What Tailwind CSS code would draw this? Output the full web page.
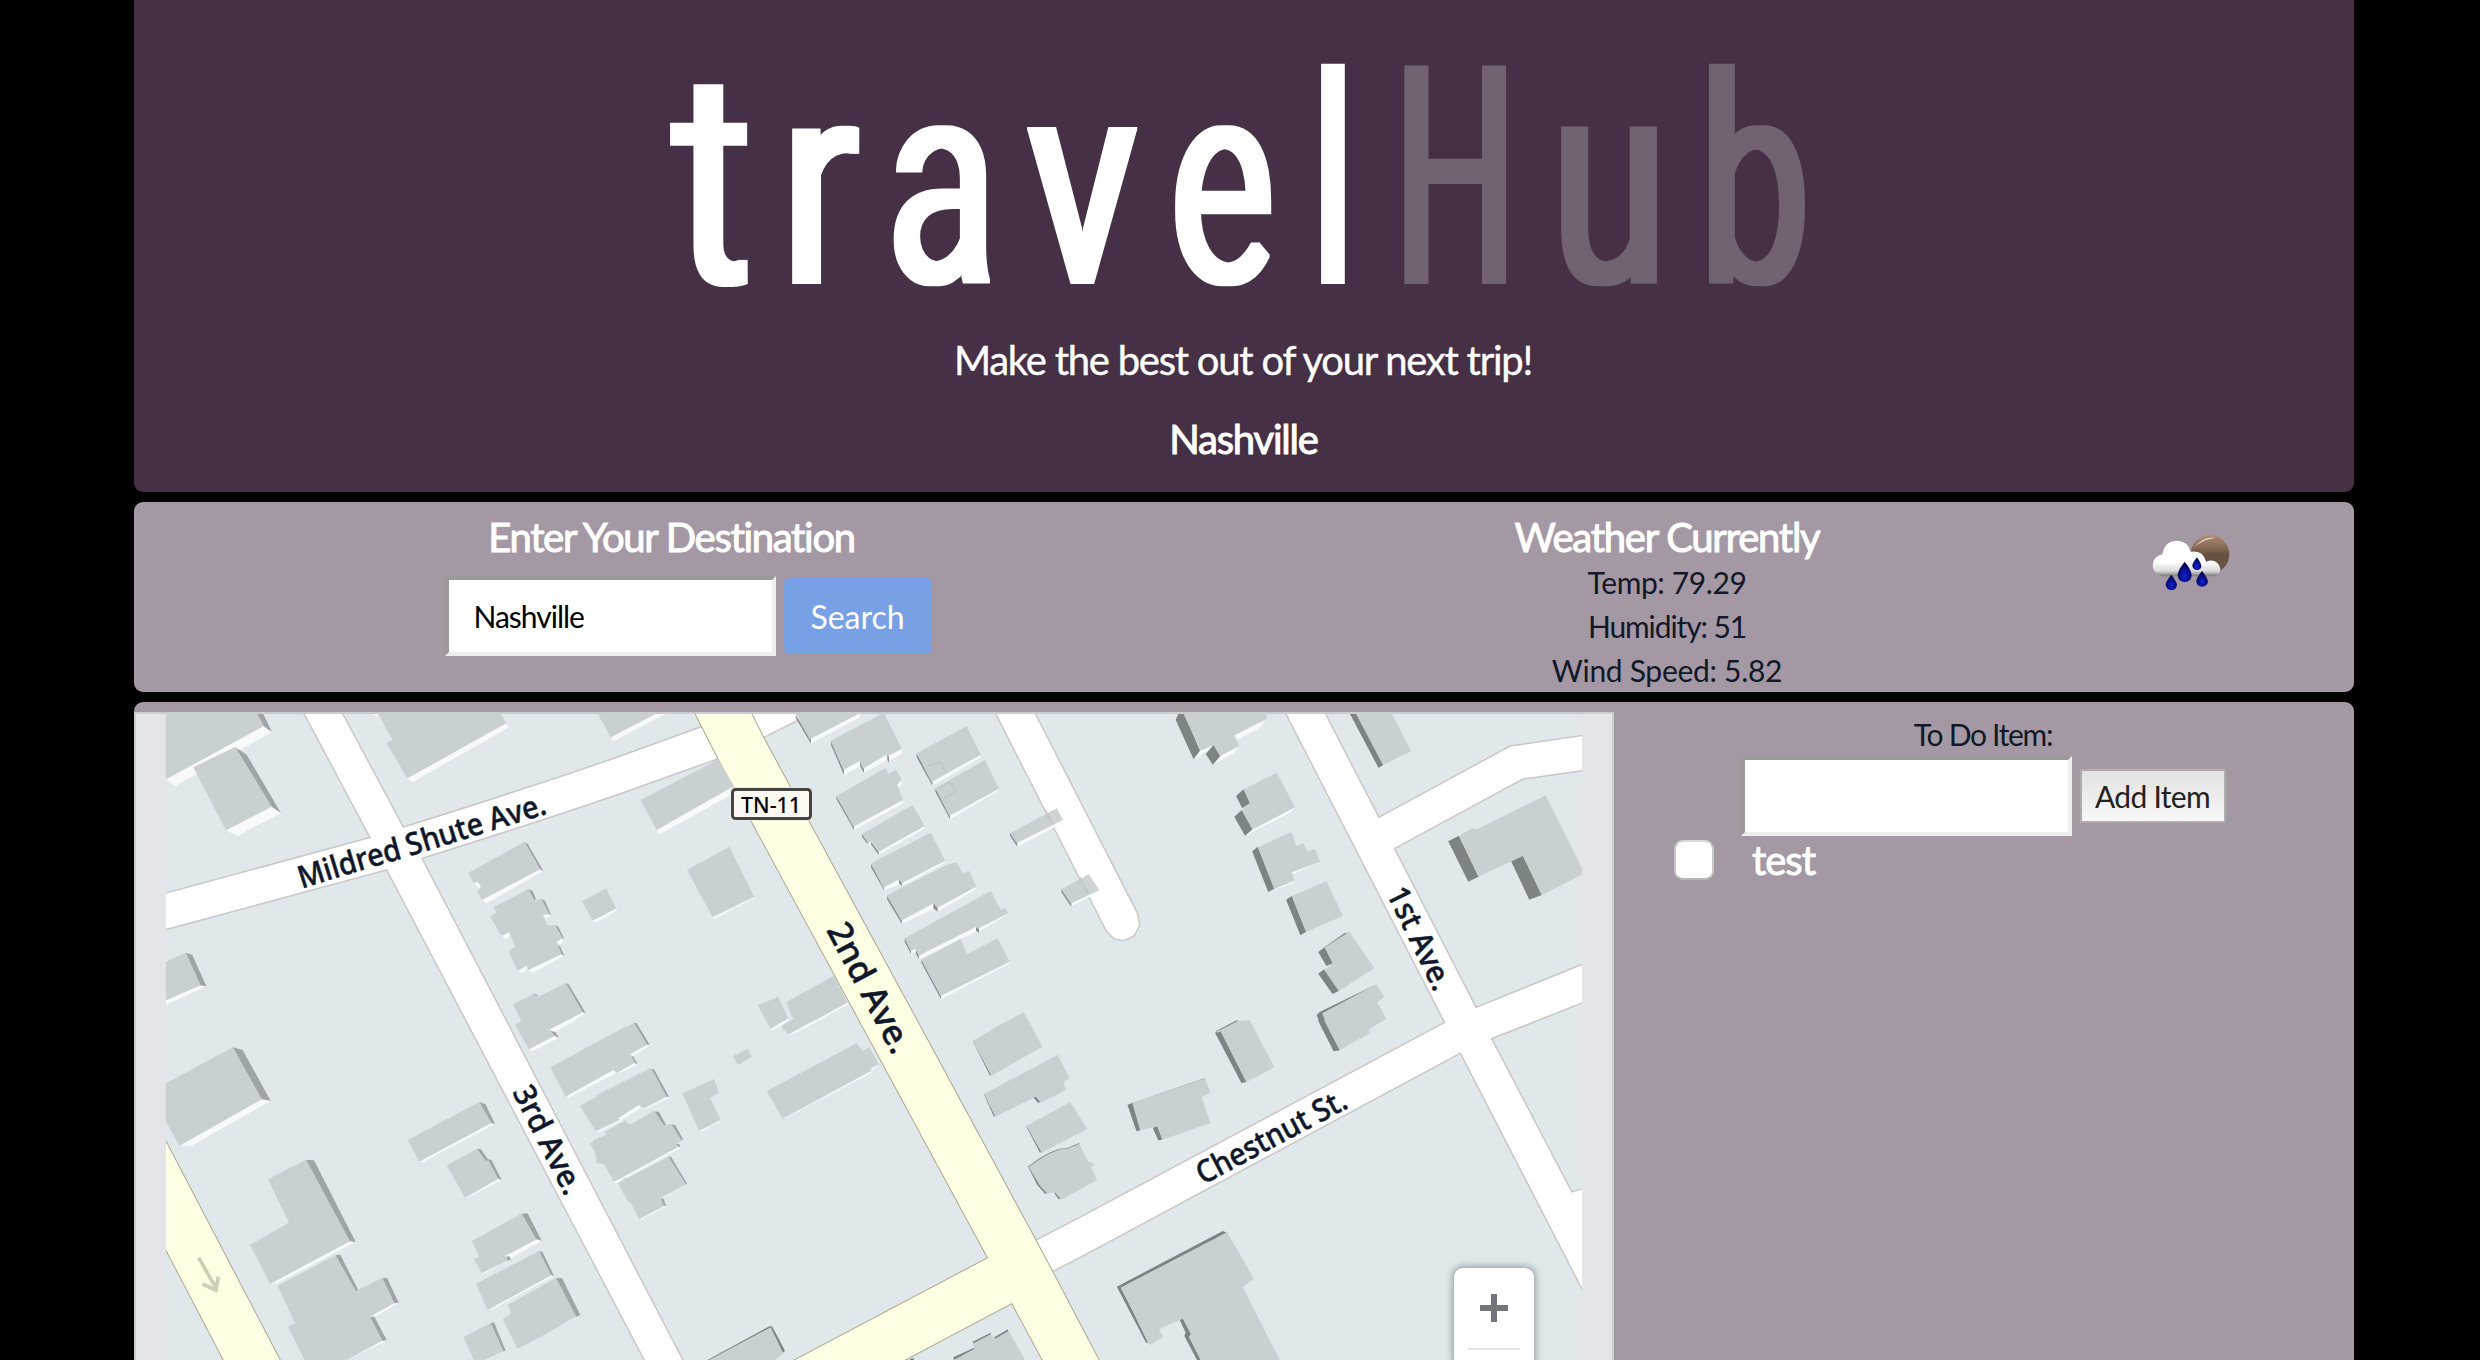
<!DOCTYPE html>
<html lang="en">
<head>
<meta charset="utf-8">
<title>travelHub</title>
<script src="https://cdn.jsdelivr.net/npm/@tailwindcss/browser@4"></script>
</head>
<body class="h-[1360px] overflow-hidden bg-black font-[Lato,sans-serif] text-[30px] leading-[44px] text-[#111827]">
<main class="ml-[134px] flex w-[2220px] flex-col gap-[10px]">

<!-- Header -->
<header class="flex h-[492px] flex-col items-center rounded-b-[9px] bg-[#463046] text-[40px] leading-[48px] text-white">
<svg class="h-[336px] w-[1200px] shrink-0" viewBox="644 0 1200 336" font-family="Roboto" font-size="309" role="img" aria-label="travelHub">
<defs><filter id="w" x="-5%" y="-5%" width="110%" height="110%"><feMorphology operator="dilate" radius="4 1"/></filter></defs>
<g filter="url(#w)" class="fill-white">
<text transform="translate(673 283) scale(.783 .975)">t</text>
<text transform="translate(780.2 283) scale(.75 .94)">r</text>
<text transform="translate(886.9 282.5) scale(.655 .94)">a</text>
<text transform="translate(1027.3 283) scale(.736 .95)">v</text>
<text transform="translate(1170.2 282.5) scale(.636 .94)">e</text>
<text transform="translate(1311.9 283) scale(.56 .942)">l</text>
</g>
<g filter="url(#w)" class="fill-[#716272]">
<text transform="translate(1394.2 283) scale(.555 .985)">H</text>
<text transform="translate(1551 282.5) scale(.683 .95)">u</text>
<text transform="translate(1699.5 282.5) scale(.636 .94)">b</text>
</g>
</svg>
<p class="mr-[2px] tracking-[-1.25px] [-webkit-text-stroke:0.4px_white]">Make the best out of your next trip!</p>
<h2 class="mt-[31px] mr-[1px] tracking-[-1.2px] [-webkit-text-stroke:1px_white]">Nashville</h2>
</header>

<!-- Search and weather -->
<section class="flex h-[190px] rounded-[9px] bg-[#a498a5] pt-[11px]">
<div class="flex w-[1110px] flex-col items-center">
<h3 class="mr-[35px] text-[40px] leading-[48px] tracking-[-1.3px] text-white [-webkit-text-stroke:1px_white]">Enter Your Destination</h3>
<div class="mt-[15px] flex items-center gap-[8px]">
<input class="-ml-[2px] h-[80px] w-[331px] border-4 border-t-[#9a9a9a] border-r-[#eee] border-b-[#eee] border-l-[#9a9a9a] bg-white px-[25px] tracking-[-1px] text-black" value="Nashville">
<button class="h-[76px] w-[148px] rounded-[6px] bg-[#78a0e5] pt-[2px] text-[32px] text-white">Search</button>
</div>
</div>
<div class="flex w-[846px] flex-col items-center">
<h3 class="text-[40px] leading-[48px] tracking-[-1.25px] text-white [-webkit-text-stroke:1px_white]">Weather Currently</h3>
<p class="-mt-[1px] tracking-[-0.4px]">Temp: 79.29</p>
<p class="tracking-[-1.1px]">Humidity: 51</p>
<p class="tracking-[-0.3px]">Wind Speed: 5.82</p>
</div>
<svg class="-mt-[2px] ml-[5px] h-[100px] w-[190px]" viewBox="-75 0 570 300">
<defs>
<linearGradient id="cl" x1="0" y1="0" x2="0" y2="1"><stop offset=".6" stop-color="#fff"/><stop offset=".85" stop-color="#d8d8d8"/><stop offset="1" stop-color="#777"/></linearGradient>
<linearGradient id="mn" x1="0" y1="0" x2="0" y2="1"><stop offset="0" stop-color="#b08a75"/><stop offset=".3" stop-color="#8a6c58"/><stop offset=".5" stop-color="#675040"/><stop offset="1" stop-color="#6e5848"/></linearGradient>
<radialGradient id="dr" cx=".5" cy=".7" r=".6"><stop offset="0" stop-color="#1020d8"/><stop offset="1" stop-color="#02024a"/></radialGradient>
</defs>
<circle cx="270" cy="130" r="58" fill="url(#mn)"/>
<path d="M222 112Q240 86 285 80Q245 76 222 112Z" fill="#f0dccf"/>
<path d="M128 196Q98 190 98 162Q100 136 127 130Q134 90 170 89Q204 90 212 122Q250 116 258 152Q290 140 301 172Q302 194 280 196Z" fill="url(#cl)"/>
<g fill="url(#dr)"><path d="M194 152Q173 178 173 192Q175 213 194 213Q214 213 215 192Q214 176 194 152Z"/><path d="M231 139Q216 158 217 165Q220 177 231 177Q243 177 244 165Q243 156 231 139Z"/><path d="M154 191Q137 212 137 221Q140 237 154 237Q169 237 171 221Q169 210 154 191Z"/><path d="M246 180Q229 201 229 211Q231 227 246 227Q262 227 264 211Q262 200 246 180Z"/></g>
</svg>
</section>

<!-- Map and to-do list -->
<section class="flex h-[658px] rounded-t-[9px] bg-[#a498a5] pt-[10px]">
<div class="relative flex h-[648px] w-[1480px] justify-center border-x-2 border-t-2 border-[#c9cdd0] bg-[#e4e5e9]">
<svg class="h-[646px] w-[1416px]" viewBox="166 714 1416 646">
<defs>
<g id="wr">
<path d="M296 697L371 838L160 895.5V930.5L387 869L654 1377H691L421 858Q560 814 620 793L718 758L763 737L805 716V700L700 728L620 757Q540 785 403 828L333 697Z"/>
<path d="M988 697L1107 930.7L1114.3 938.3L1123.6 940L1133.6 935.3L1139 925.7L1137 914L1026 697Z"/>
<path d="M1278 697L1445.5 1022.7L1080 1218L1030 1244L1050 1272L1080 1256.7L1460.7 1052.3L1590 1303V1187L1571.4 1192.7L1490.7 1038.3L1590 999V962L1475.7 1008.3L1393.6 848.3L1522.9 778.3L1590 769V735L1510.4 746.7L1378.6 818.3L1316 697Z"/>
</g>
<g id="yr">
<path d="M687 697L718 758L752 822L988 1258L795 1360L770 1373L880 1373L1012 1303L1048 1370H1104L1052 1271L1036 1241L922 1030L809 822L763 737L743 697Z"/>
<path d="M150 1112L166 1142L285 1370H229L150 1219Z"/>
</g>
</defs>
<rect x="166" y="714" width="1416" height="656" fill="#e0e8eb"/>
<use href="#wr" stroke="#c8c8c8" stroke-width="3"/>
<use href="#wr" fill="#fff"/>
<use href="#yr" stroke="#a3a38c" stroke-width="1.8"/>
<use href="#yr" fill="#ffffe4"/>

<!-- Buildings, north west -->
<g transform="translate(120 690) scale(.33333)">
<path fill="#f7f9fb" d="M138 268L165 289L456 126L430 108ZM318 421L352 438L483 369L455 350ZM862 265L875 278L1167 112L1158 100ZM1473 142L1480 154L1560 110V90ZM138 930V944L259 889L240 885ZM1085 630L1100 640L1270 543L1258 538ZM1060 580L1080 595L1085 583L1075 570ZM1145 738L1160 748L1170 735L1165 725ZM1193 842L1207 850L1222 838V827ZM1225 840L1238 849L1333 797L1322 790ZM1310 757L1320 764L1333 750L1325 745ZM1268 675L1278 685L1293 676ZM1415 692L1424 699L1492 659L1487 655ZM760 72L770 80L778 72ZM1290 1018L1300 1028L1397 969L1388 965Z"/>
<path fill="#9fa5a6" d="M410 72H430L456 126L430 108ZM345 171L380 194L483 369L455 350ZM197 788L217 795L259 889L240 886ZM1213 455L1223 461L1270 543L1260 538ZM1225 598L1238 603L1248 628L1240 633ZM1265 627L1275 632L1293 674L1283 670ZM1305 704L1315 710L1333 748L1325 745ZM1310 765L1320 768L1333 797L1323 793ZM1336 879L1346 883L1397 969L1388 967ZM1240 910L1254 916L1246 922Z"/>
<path fill="#c9d0d2" d="M138 72H412L432 108L138 268ZM220 232L345 171L455 350L318 421ZM775 72H1143L1158 100L862 265L800 160L818 150ZM1433 72H1600V78L1473 142ZM138 815L197 788L242 886L138 931ZM1045 548L1213 456L1260 538L1085 630L1072 603L1083 590L1072 575L1062 580ZM1120 652L1225 598L1245 632L1265 627L1287 670L1268 676L1282 706H1305L1328 745L1310 755L1325 793L1225 840L1220 826L1193 842L1165 783L1185 770L1168 727L1145 738L1110 680L1130 667ZM1386 633L1458 597L1488 655L1418 692ZM1179 943L1242 911L1252 922L1338 879L1388 967L1290 1019L1305 1037L1228 1080L1185 1004L1204 993Z"/>
</g>
<!-- Buildings, centre north -->
<g transform="translate(600 690) scale(.33333)">
<path fill="#f7f9fb" d="M32 142L38 154L196 72H165ZM170 420L178 433L400 312L394 290ZM629 148L632 161L780 82V68ZM728 240L733 255L783 228L780 212ZM788 236L792 248L862 210L858 194ZM864 196V215L905 192L906 176ZM758 410L762 420L910 340L906 328ZM892 285L898 293L906 282L903 272ZM832 486L836 494L975 415L970 408ZM803 460L812 465L816 455ZM848 593L852 601L902 582L897 568ZM905 580V588L1036 518L1032 510ZM992 278L997 287L1143 202L1138 192ZM1046 378L1050 388L1197 300L1193 292ZM902 690L906 702L1003 656L1000 640ZM1010 653L1013 665L1129 597L1125 590ZM954 795L960 806L1131 724L1128 712ZM1132 714L1135 726L1225 672L1220 666ZM930 785L934 792L948 782L945 774ZM1020 918L1023 928L1230 820L1226 814ZM1248 460L1252 470L1370 408L1360 400ZM1410 640L1412 651L1495 606L1490 600ZM338 680L342 688L463 623L460 618ZM0 685V692L51 660L45 655ZM512 1014L518 1022L568 990L560 985ZM545 1003L600 1022L745 943L740 936L568 1025Z"/>
<path fill="#8a9091" d="M587 76L633 148V161L587 84ZM693 152L732 240V255L693 165ZM780 212L792 236V248L781 230ZM862 193L867 200V218L862 210ZM709 318L762 408V420L709 326ZM786 432L803 455V463L786 440ZM813 455L836 486V495L813 463ZM813 522L852 590V601L813 532ZM897 568L906 578V588L897 580ZM950 190L997 275V287L950 202ZM1006 295L1050 376V388L1006 305ZM861 618L906 690V702L861 628ZM1000 640L1013 653V665L1000 655ZM914 745L933 782V792L914 756ZM948 778L957 795V806L948 792ZM1128 712L1137 714V728L1128 722ZM964 808L1023 916V928L964 818ZM1230 428L1252 459V470L1230 437ZM1384 598L1414 640V651L1384 606Z"/>
<path fill="#c9d0d2" d="M0 75V72H165L32 142ZM122 330L355 208L402 288L170 420ZM587 72H775L629 148ZM692 152L852 68L906 176L864 198L862 193L788 236L780 212L730 240ZM709 318L857 234L866 252L888 240L905 268L892 285L909 330L760 410ZM786 432L938 345L974 408L835 486L813 453L805 460ZM813 520L992 428L1036 512L905 580L897 568L850 593ZM861 616L1040 525L1070 516L1088 550L1108 543L1129 590L1012 653L1002 640L904 692ZM914 745L1172 603L1203 660L1215 653L1225 670L1134 716L1128 710L956 797L946 776L932 784ZM964 810L1082 746L1101 792L1193 745L1229 815L1022 918ZM950 190L1100 108L1143 194L994 276ZM1006 294L1155 210L1197 296L1048 378ZM261 540L388 470L463 620L338 682ZM0 605L18 597L48 655L0 682ZM473 946L535 920L565 985L512 1016ZM558 936L702 857L742 938L590 1022H550L545 1008L580 988ZM1170 1021L1271 967L1300 1021Z"/>
<path fill="#c3cacb" opacity=".82" d="M1230 430L1370 355L1389 390L1250 460ZM1384 598L1466 553L1498 600L1412 641Z"/>
<g stroke="#bdc3c4" stroke-width="3" fill="none"><path d="M1337 360L1362 405M1440 560L1466 610M980 230L1020 216L1040 250M1015 300L1050 275L1068 305L1030 328"/></g>
</g>
<!-- Buildings, north east -->
<g transform="translate(1080 690) scale(.35714 .33333)">
<path fill="#f7f9fb" d="M432 136L440 150L497 118L524 86ZM392 198L372 224L430 190L446 168ZM335 180L318 208L360 180L372 165ZM482 420L462 437L590 368L602 352ZM840 225L836 234L928 186ZM540 597L527 606L600 578V570ZM593 547L598 552L672 515Z"/>
<path fill="#7d8483" d="M275 72H292L336 182L318 208L268 90ZM352 192L374 165L393 198L372 224ZM458 298L437 318L454 355L476 340ZM453 360L432 380L462 437L483 418ZM498 470L482 484L527 606L544 596ZM593 618L577 629L617 736L633 725ZM685 772L667 786L690 828L708 820ZM684 838L667 851L707 912L725 903ZM740 730L684 772H690L750 728ZM678 968L662 974L680 1021H700ZM830 883L664 970L680 972ZM756 72H776L849 225L836 234ZM1061 437L1031 454L1087 575L1116 560ZM1240 497L1207 514L1258 629L1293 615Z"/>
<path fill="#c9d0d2" d="M290 72H520L524 86L432 136L446 168L392 198L374 165L338 182ZM458 298L551 248L602 352L483 418L453 360L476 340ZM498 472L592 426L606 468L626 459L637 485L658 476L672 515L593 547L601 572L544 597ZM593 618L690 573L736 678L633 725ZM685 772L754 725L824 834L725 903L684 840L708 820ZM678 970L830 883L852 920L832 936L857 986L806 1021H698ZM773 72H874L928 184L849 226ZM1061 439L1100 413L1108 419L1304 316L1406 535V553L1293 615L1240 497L1116 560Z"/>
</g>
<!-- Buildings, south west -->
<g transform="translate(120 1020) scale(.33333)">
<path fill="#f7f9fb" d="M178 377L212 379L452 242L425 238ZM450 792L470 790L706 666L690 662ZM1228 88L1237 94L1316 54L1305 47ZM1290 28L1300 38L1370 0H1345ZM897 425L908 427L1124 313L1115 309ZM1033 533L1045 532L1145 480L1135 476ZM1082 760L1090 762L1264 662L1250 658L1155 708ZM755 885L765 890L835 849H820ZM1337 228L1344 233L1486 160L1480 150ZM1425 332L1436 336L1505 302L1497 292ZM1478 485L1488 490L1500 483ZM1103 868L1115 869L1302 768L1290 763ZM680 1020L800 962L785 960Z"/>
<path fill="#9fa5a6" d="M338 82L368 90L452 242L425 238ZM558 419L582 421L707 666L688 664ZM1078 246L1096 252L1125 312L1113 308ZM1071 386L1083 388L1103 417L1115 421L1145 480L1132 475ZM1205 581L1223 580L1265 662L1248 657ZM1257 694L1267 695L1302 768L1293 765ZM1308 775L1326 774L1381 885L1368 890ZM646 706L661 704L717 815L706 812ZM787 775L801 773L836 848L823 850ZM750 892L763 890L800 960L787 963ZM1112 910L1122 907L1157 992L1150 994ZM1152 712L1168 709L1173 719L1160 722ZM1292 32L1306 36L1317 54L1304 48Z"/>
<path fill="#c9d0d2" d="M138 190L338 82L425 238L178 377L138 305ZM444 478L558 419L690 664L450 792L390 674L507 608ZM473 797L646 706L708 813L787 773L823 850L750 890L787 962L680 1020H553L504 920L525 910ZM864 359L1078 246L1114 309L897 425ZM980 436L1071 387L1097 422L1105 420L1135 476L1035 534ZM1056 663L1205 581L1248 659L1155 708L1165 720L1085 760L1062 717L1078 712ZM1067 791L1257 694L1294 766L1103 870ZM1164 854L1308 774L1368 889Q1250 960 1192 986L1148 898L1174 881ZM1030 951L1112 909L1150 994L1090 1021H1062ZM1291 142L1520 18V130L1480 150L1337 230ZM1379 257L1520 182V285L1428 334ZM1410 370L1460 345L1455 335L1520 300V480H1480L1450 428L1444 432Z"/>
<path d="M236 713L289 806M248 792L288 811L295 770" fill="none" stroke="#cfcfb8" stroke-width="11"/>
</g>
<!-- Buildings, centre south -->
<g transform="translate(600 1020) scale(.33333)">
<path fill="#f7f9fb" d="M0 172V182L46 160L40 150ZM52 152V161L112 134L104 126ZM90 103L95 112L149 76L142 72ZM0 325V335L50 306ZM50 298L60 302L122 264L118 254ZM125 260L130 270L207 234L200 228ZM40 482L50 488L240 385L230 376ZM118 595L122 600L196 560L190 555ZM182 534H190L262 494ZM545 290L550 297L815 158L812 152ZM812 148L818 152L836 133ZM513 22L516 28L555 5L550 0ZM563 42L567 48L660 0H640ZM296 330L302 335L364 302L360 298Z"/>
<path fill="#9fa5a6" d="M100 8L110 10L149 74L140 74ZM92 105L100 110L112 132L105 130ZM152 146L162 148L207 230L198 230ZM162 274L177 276L198 315L190 318ZM212 312L226 316L249 358L240 362ZM205 411L213 410L262 492L254 493ZM180 536L190 534L198 558L190 556ZM225 374L238 371L240 381ZM47 297L58 297L53 303ZM78 314L90 310L85 318Z"/>
<path fill="#7d8483" d="M510 918L517 920L555 992L545 1002L510 925L335 1020H322ZM1118 62L1122 62L1174 165L1170 167ZM1151 222L1156 222L1186 288L1182 290ZM1300 232L1308 228L1322 246L1314 248ZM1278 318L1282 318L1325 396L1320 398ZM1284 440L1290 440L1320 496L1330 500L1342 520L1335 521L1312 495ZM1362 518L1370 516L1384 536L1376 538ZM1284 440Q1330 402 1378 386L1400 385L1438 369V374L1400 390H1380Q1330 408 1290 444ZM1118 965L1172 938V945L1120 972ZM1183 952L1224 928V936L1186 960ZM1060 1012L1122 983V991L1062 1020ZM930 1017L942 1014V1022H930Z"/>
<path fill="#c9d0d2" d="M-10 72L102 8L142 74L90 103L105 128L52 158L40 150L0 172H-10ZM-10 225L153 143L200 230L130 266L118 254L52 294L55 302L0 328H-10ZM-20 360L18 345L15 337L76 310L90 314L162 272L192 316L214 311L244 360L226 374L236 380L42 486L10 430H-10ZM54 490L206 410L258 493L182 534L192 558L118 598L90 545H84ZM399 109L444 86L454 112L415 135ZM247 220L342 177L357 218L331 234L362 300L297 333ZM500 213L770 70L788 92L808 82L836 132L812 145V154L548 296ZM497 0H555L513 26ZM546 18L580 0H645L565 44ZM325 1021L512 922L550 1000L525 1021ZM1118 62L1230 0H1285L1327 80L1174 167ZM1152 222L1373 104L1409 175L1390 187L1398 210L1322 248L1308 230L1186 290ZM1279 318L1411 246L1461 327L1325 398ZM1286 442Q1330 406 1380 388L1402 386L1438 371L1465 425L1478 428L1482 438L1472 442L1492 480L1384 539L1364 517L1342 521L1322 500ZM1060 1021L1122 987L1120 970L1172 943L1184 957L1226 932L1278 1025H1060Z"/>
</g>
<!-- Buildings, south east -->
<g transform="translate(1080 1020) scale(.35714 .33333)">
<path fill="#7d8483" d="M392 29L378 38L452 189L466 186ZM380 34L440 0L442 4L385 38ZM666 0H684L728 91L710 94ZM147 248L133 255L158 334L169 331ZM147 250L350 174V177L150 254ZM216 318L204 324L219 361L231 359ZM400 633L411 638L114 803L194 968L185 968L103 800ZM288 894L279 899L296 938L292 947L328 1021H340L305 950L311 943Z"/>
<path fill="#c9d0d2" d="M392 30L442 3L475 0L544 142L466 186ZM683 0H852L806 25L811 40L727 90ZM147 250L350 175L365 217L341 232L365 310L231 359L217 318L169 331ZM116 803L412 637L487 776L456 801L560 1021H338L305 950L311 943L288 896L221 928L233 951L198 975L190 968Z"/>
</g>

<!-- Street names -->
<defs><path id="mp" d="M301.7 888.7Q350 873 398 860Q470 837 570 807"/></defs>
<g font-family="Noto Sans" font-weight="500" font-size="31" fill="#0f172a" stroke="#0f172a" stroke-width=".5">
<text textLength="258" lengthAdjust="spacingAndGlyphs"><textPath href="#mp" textLength="258" lengthAdjust="spacingAndGlyphs">Mildred Shute Ave.</textPath></text>
<text transform="translate(1203 1185) rotate(-28)" textLength="166" lengthAdjust="spacingAndGlyphs">Chestnut St.</text>
<text transform="translate(1386 893) rotate(64)" textLength="111" lengthAdjust="spacingAndGlyphs">1st Ave.</text>
<text transform="translate(826 930) rotate(62)" font-size="34" textLength="143" lengthAdjust="spacingAndGlyphs">2nd Ave.</text>
<text transform="translate(512 1092) rotate(63)" textLength="118" lengthAdjust="spacingAndGlyphs">3rd Ave.</text>
</g>
<rect x="730" y="787" width="83" height="34" rx="5" fill="#efe8dc"/>
<rect x="732.5" y="789.5" width="78" height="29" rx="3" fill="#fdf8f1" stroke="#444" stroke-width="3"/>
<text x="741" y="813" font-family="Noto Sans" font-weight="500" font-size="22" textLength="60" lengthAdjust="spacingAndGlyphs" fill="#000">TN-11</text>
</svg>
<div class="absolute top-[554px] right-[78px] flex h-[94px] w-[80px] flex-col items-center rounded-t-[9px] bg-white shadow-[0_0_6px_2px_rgba(80,95,110,.5)]">
<svg class="mt-[26px] h-[28px] w-[28px]" viewBox="0 0 28 28"><path d="M0 14H28M14 0V28" stroke="#72767c" stroke-width="6"/></svg>
<div class="mt-[26px] h-[2px] w-[52px] bg-[#e5e5e5]"></div>
</div>
</div>

<div class="flex w-[740px] flex-col items-center">
<p class="mr-[2px] tracking-[-1.3px]">To Do Item:</p>
<div class="flex items-center gap-[8px]">
<input class="-ml-[2px] h-[80px] w-[331px] border-4 border-t-[#9a9a9a] border-r-[#eee] border-b-[#eee] border-l-[#9a9a9a] bg-white px-[25px]">
<button class="h-[54px] w-[146px] border-2 border-[#adadad] bg-linear-to-b from-[#e2e2e2] to-[#f8f8f8] leading-[48px] tracking-[-0.7px] text-[#222]">Add Item</button>
</div>
<div class="flex w-full items-center pl-[60px]">
<span class="h-[40px] w-[40px] rounded-[9px] border-2 border-t-[#d8d8d8] border-r-[#c8c8c8] border-b-[#b8b8b8] border-l-[#c8c8c8] bg-white"></span>
<span class="ml-[38px] text-[40px] leading-[48px] tracking-[-1px] text-white [-webkit-text-stroke:1px_white]">test</span>
</div>
</div>
</section>
</main>
</body>
</html>
